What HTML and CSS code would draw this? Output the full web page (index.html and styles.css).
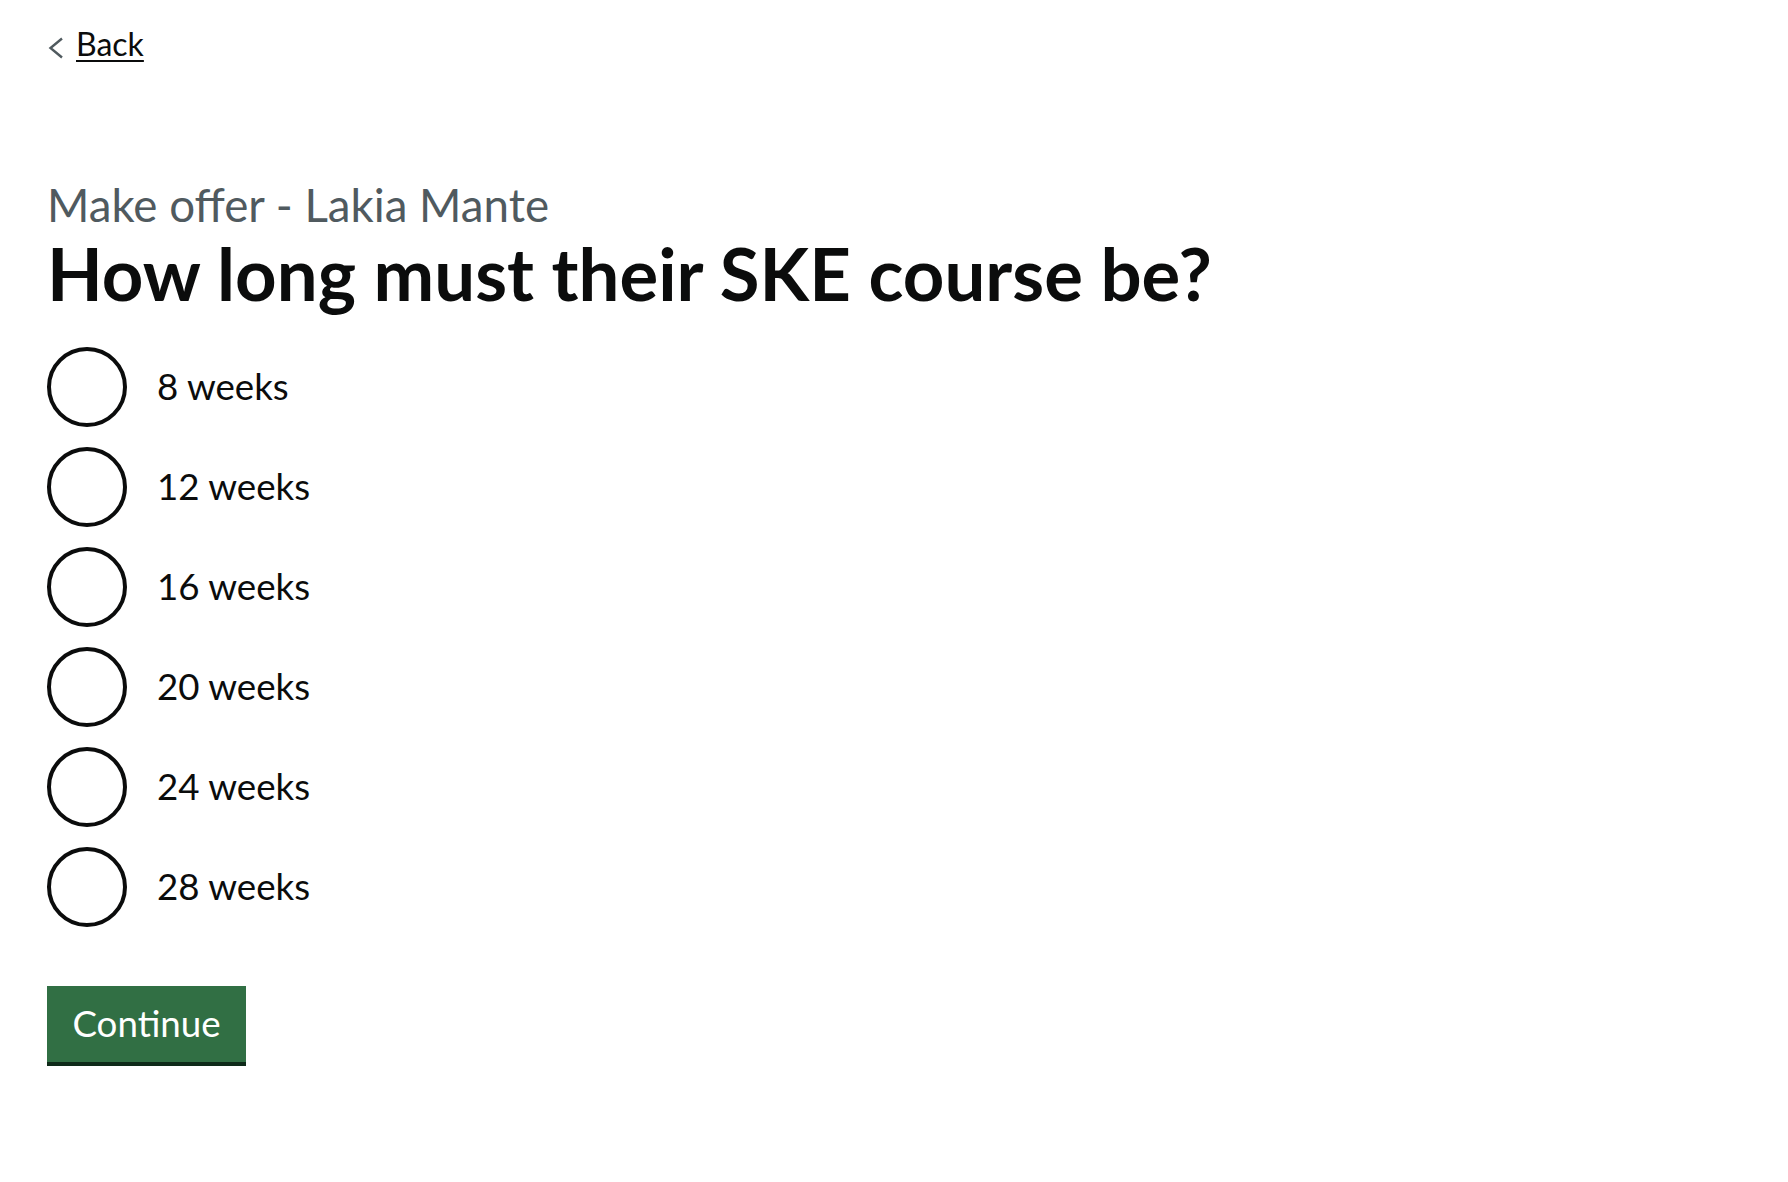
FILE: index.html
```html
<!DOCTYPE html>
<html lang="en">
<head>
<meta charset="utf-8">
<title>How long must their SKE course be?</title>
<link rel="stylesheet" href="styles.css">
</head>
<body>
<div class="page">
  <a class="back-link" href="#">
    <svg class="back-icon" width="18" height="22" viewBox="0 0 18 22" aria-hidden="true"><polyline points="15,1.5 3.5,11 15,20.5" fill="none" stroke="#505a5f" stroke-width="2.4"/></svg>
    <span class="back-text">Back</span>
  </a>
  <main class="main">
    <form class="form">
      <fieldset class="fieldset">
        <legend class="legend">
          <span class="caption">Make offer - Lakia Mante</span>
          <h1 class="heading">How long must their SKE course be?</h1>
        </legend>
        <div class="radios">
          <label class="radio"><span class="radio-circle"></span><span class="radio-label">8 weeks</span></label>
          <label class="radio"><span class="radio-circle"></span><span class="radio-label">12 weeks</span></label>
          <label class="radio"><span class="radio-circle"></span><span class="radio-label">16 weeks</span></label>
          <label class="radio"><span class="radio-circle"></span><span class="radio-label">20 weeks</span></label>
          <label class="radio"><span class="radio-circle"></span><span class="radio-label">24 weeks</span></label>
          <label class="radio"><span class="radio-circle"></span><span class="radio-label">28 weeks</span></label>
        </div>
      </fieldset>
      <button class="button" type="button">Continue</button>
    </form>
  </main>
</div>
</body>
</html>
```
FILE: styles.css
```css
html, body {
  margin: 0;
  padding: 0;
  background: #ffffff;
}
body {
  font-family: Lato, "Liberation Sans", sans-serif;
  color: #0b0c0c;
}
.page {
  padding-left: 47px;
}
.back-link {
  display: inline-flex;
  align-items: flex-start;
  margin-top: 24px;
  color: #0b0c0c;
  text-decoration: none;
  font-size: 32px;
  line-height: 40px;
}
.back-icon {
  display: block;
  flex: none;
  margin-top: 13px;
  margin-right: 11px;
}
.back-text {
  text-decoration: underline;
  text-decoration-thickness: 2px;
  text-underline-offset: 4px;
}
.main {
  display: block;
  padding-top: 112px;
}
.form {
  margin: 0;
}
.fieldset {
  margin: 0;
  padding: 0;
  border: 0;
  min-width: 0;
}
.legend {
  padding: 0;
  display: block;
}
.caption {
  display: block;
  font-size: 45.7px;
  line-height: 57px;
  color: #505a5f;
}
.heading {
  margin: 0;
  font-size: 72.5px;
  line-height: 80px;
  font-weight: 700;
  color: #0b0c0c;
}
.radios {
  display: flex;
  flex-direction: column;
  gap: 20px;
  margin-top: 34px;
}
.radio {
  display: flex;
  align-items: flex-start;
  min-height: 80px;
}
.radio-circle {
  flex: none;
  width: 80px;
  height: 80px;
  box-sizing: border-box;
  border: 4px solid #0b0c0c;
  border-radius: 50%;
  background: #ffffff;
}
.radio-label {
  padding: 16px 30px 10px 30px;
  font-size: 36.7px;
  line-height: 46px;
  color: #0b0c0c;
}
.button {
  display: block;
  margin: 59px 0 0 0;
  width: 199px;
  box-sizing: border-box;
  padding: 14px 0 16px 0;
  border: 0;
  border-bottom: 4px solid #0e2a19;
  border-radius: 0;
  background: #316f44;
  color: #ffffff;
  font-family: Lato, "Liberation Sans", sans-serif;
  font-size: 36.7px;
  line-height: 46px;
  text-align: center;
  cursor: pointer;
}
```
